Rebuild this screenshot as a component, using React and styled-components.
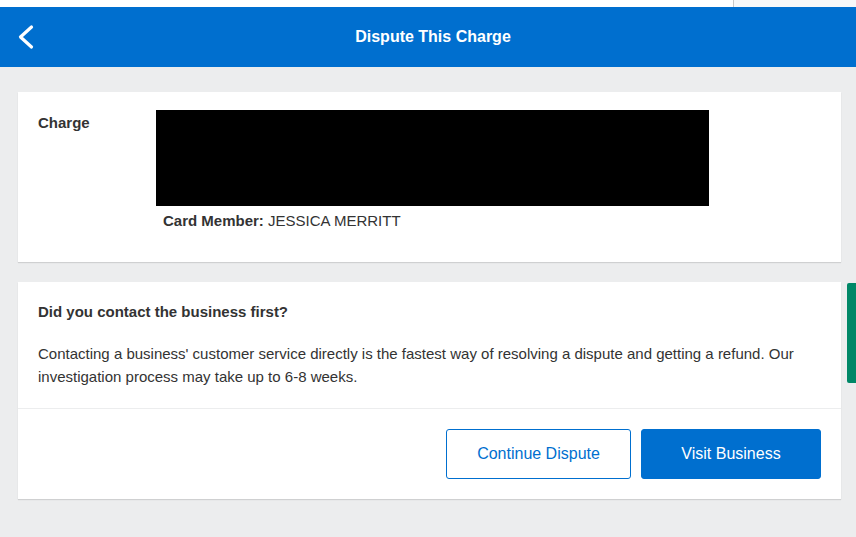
import React from "react";
import styled, { createGlobalStyle } from "styled-components";

const Global = createGlobalStyle`
  html, body { margin: 0; padding: 0; }
  body {
    background: #ecedee;
    font-family: "Liberation Sans", Arial, sans-serif;
    color: #333;
    width: 856px;
    height: 537px;
    overflow: hidden;
  }
`;

const Page = styled.div`
  position: relative;
  width: 856px;
  height: 537px;
  display: flex;
  flex-direction: column;
`;

const TopStrip = styled.div`
  height: 7px;
  display: flex;
  background: #fff;
`;

const TopRight = styled.div`
  margin-left: auto;
  width: 122px;
  border-left: 1px solid #c8c8c8;
  background: #f7f8f9;
`;

const Header = styled.header`
  height: 60px;
  background: #006fcf;
  display: grid;
  grid-template-columns: 60px 1fr 60px;
  align-items: center;
`;

const BackButton = styled.button`
  border: 0;
  background: none;
  padding: 0 0 0 14px;
  height: 60px;
  display: flex;
  align-items: center;
  cursor: pointer;
`;

const Title = styled.h1`
  margin: 0;
  text-align: center;
  color: #fff;
  font-size: 16px;
  font-weight: 700;
  padding-left: 10px;
`;

const Content = styled.main`
  padding: 25px 15px 0 18px;
  display: flex;
  flex-direction: column;
  gap: 20px;
`;

const Card = styled.section`
  background: #fff;
  box-shadow: 0 1px 1px rgba(0, 0, 0, 0.12);
`;

const ChargeRow = styled.div`
  display: grid;
  grid-template-columns: 118px 553px;
  padding: 18px 20px 24px 20px;
  height: 128px;
`;

const Label = styled.div`
  font-size: 15px;
  font-weight: 700;
  color: #333;
  padding-top: 4px;
`;

const Redacted = styled.div`
  width: 553px;
  height: 96px;
  background: #000;
`;

const Member = styled.div`
  font-size: 15px;
  color: #333;
  padding: 6px 0 0 7px;
  b { font-weight: 700; }
`;

const Body = styled.div`
  padding: 21px 20px 20px 20px;
  height: 85px;
`;

const Question = styled.h2`
  margin: 0 0 22px;
  font-size: 15px;
  font-weight: 700;
  color: #333;
`;

const Text = styled.p`
  margin: 0;
  font-size: 15px;
  line-height: 23px;
  color: #333;
  max-width: 780px;
`;

const Actions = styled.div`
  border-top: 1px solid #ecedee;
  display: flex;
  justify-content: flex-end;
  gap: 10px;
  padding: 20px 20px 20px;
`;

const Button = styled.button`
  height: 50px;
  width: ${(p) => p.$w}px;
  border-radius: 3px;
  font-family: "Liberation Sans", Arial, sans-serif;
  font-size: 16px;
  cursor: pointer;
  border: 1px solid #006fcf;
  background: ${(p) => (p.$primary ? "#006fcf" : "#fff")};
  color: ${(p) => (p.$primary ? "#fff" : "#006fcf")};
`;

const FeedbackTab = styled.div`
  position: absolute;
  right: 0;
  top: 283px;
  width: 9px;
  height: 100px;
  background: #008767;
  border-radius: 2px 0 0 2px;
`;

export default function App() {
  return (
    <>
      <Global />
      <Page>
        <TopStrip>
          <TopRight />
        </TopStrip>
        <Header>
          <BackButton aria-label="Back">
            <svg width="22" height="28" viewBox="0 0 22 28">
              <path d="M17.5 4 L6.5 14 L17.5 24" fill="none" stroke="#fff" strokeWidth="3.2" strokeLinecap="round" strokeLinejoin="round" />
            </svg>
          </BackButton>
          <Title>Dispute This Charge</Title>
          <div />
        </Header>
        <Content>
          <Card>
            <ChargeRow>
              <Label>Charge</Label>
              <div>
                <Redacted />
                <Member>
                  <b>Card Member:</b> JESSICA MERRITT
                </Member>
              </div>
            </ChargeRow>
          </Card>
          <Card>
            <Body>
              <Question>Did you contact the business first?</Question>
              <Text>
                Contacting a business' customer service directly is the fastest way of resolving a dispute and getting a refund. Our investigation process may take up to 6-8 weeks.
              </Text>
            </Body>
            <Actions>
              <Button $w={185}>Continue Dispute</Button>
              <Button $w={180} $primary>Visit Business</Button>
            </Actions>
          </Card>
        </Content>
        <FeedbackTab />
      </Page>
    </>
  );
}
